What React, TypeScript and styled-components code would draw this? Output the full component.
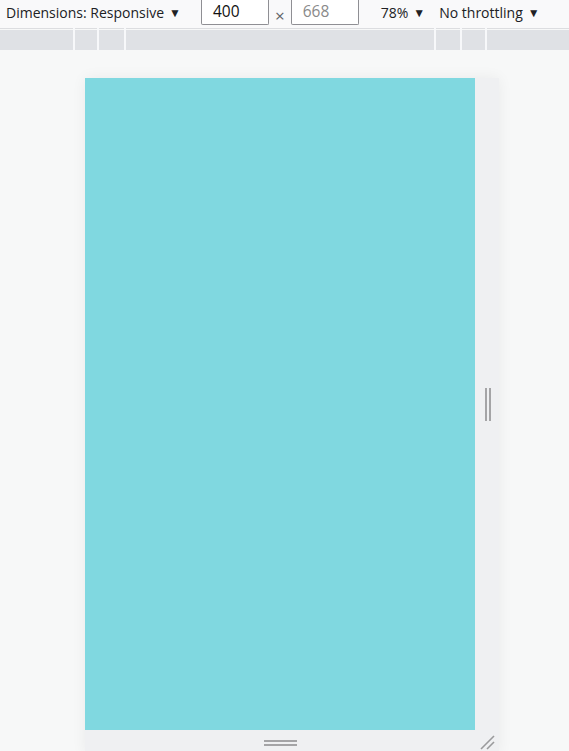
import React from 'react';
import styled, {createGlobalStyle} from 'styled-components';

const GlobalStyle = createGlobalStyle`
    html, body {
        margin: 0;
        padding: 0;
        background: #f7f8f8;
        overflow: hidden;
    }
    body {
        font-family: "Open Sans", "Noto Sans", sans-serif;
    }
`;

const Page = styled.div`
    width: 569px;
    height: 751px;
    display: flex;
    flex-direction: column;
    overflow: hidden;
`;

const Toolbar = styled.div`
    height: 29px;
    flex-shrink: 0;
    display: flex;
    align-items: center;
    background: #f9f9fa;
    border-bottom: 1px solid #dcdde0;
    font-size: 14px;
    color: #202124;
    padding-left: 6px;
    box-sizing: border-box;
`;

const Label = styled.span<{$gap?: number}>`
    margin-left: ${(p) => p.$gap ?? 0}px;
    white-space: nowrap;
    position: relative;
    top: -2px;
`;

const Caret = styled.span`
    font-size: 12px;
    margin-left: 5px;
    position: relative;
    top: -1px;
`;

const SizeInput = styled.div<{$placeholder?: boolean; $gap: number}>`
    width: 68px;
    height: 25px;
    margin-left: ${(p) => p.$gap}px;
    align-self: flex-start;
    box-sizing: border-box;
    border: 1px solid #8f8f94;
    border-top: none;
    border-radius: 0 0 2px 2px;
    background: #fff;
    font-size: 15.5px;
    line-height: 22px;
    padding-left: 11px;
    color: ${(p) => (p.$placeholder ? '#8a8a8a' : '#111')};
`;

const Times = styled.span`
    margin-left: 6px;
    margin-right: 6px;
    font-size: 17px;
    color: #5f6368;
    position: relative;
    top: 1px;
`;

const Ruler = styled.div`
    height: 20px;
    flex-shrink: 0;
    margin-top: 1px;
    background: #dfe1e5;
    position: relative;
`;

const Tick = styled.div<{$x: number}>`
    position: absolute;
    top: -2px;
    bottom: 0;
    left: ${(p) => p.$x}px;
    width: 2px;
    background: #f7f8fa;
`;

const Canvas = styled.div`
    flex: 1;
    min-height: 0;
    padding: 28px 0 0 85px;
`;

const Device = styled.div`
    display: grid;
    grid-template-columns: 390px 24px;
    grid-template-rows: 652px 24px;
    width: 414px;
    box-shadow: 0 0 14px rgba(0, 0, 0, 0.06);
`;

const Viewport = styled.div`
    background: #80d8e0;
`;

const Gutter = styled.div<{$vertical?: boolean}>`
    background: #eff0f2;
    display: flex;
    justify-content: center;
    align-items: ${(p) => (p.$vertical ? 'center' : 'flex-start')};
    padding-top: ${(p) => (p.$vertical ? '0' : '10px')};
    box-sizing: border-box;
`;

const Grip = styled.div<{$vertical?: boolean}>`
    width: ${(p) => (p.$vertical ? '2px' : '33px')};
    height: ${(p) => (p.$vertical ? '33px' : '2px')};
    ${(p) => (p.$vertical
        ? 'border-left: 2px solid #a4a4a6; border-right: 2px solid #a4a4a6; margin-left: 1px;'
        : 'border-top: 2px solid #a4a4a6; border-bottom: 2px solid #a4a4a6;')}
`;

const Corner = styled.div`
    background: #eff0f2;
    display: flex;
    align-items: flex-start;
    justify-content: flex-start;
    padding: 4px 0 0 4px;
    box-sizing: border-box;
`;

const App = () => {
    return (
        <>
            <GlobalStyle/>
            <Page>
                <Toolbar>
                    <Label>
                        {'Dimensions: Responsive'}
                        <Caret>{'▼'}</Caret>
                    </Label>
                    <SizeInput $gap={20}>{'400'}</SizeInput>
                    <Times>{'×'}</Times>
                    <SizeInput $placeholder={true} $gap={0}>{'668'}</SizeInput>
                    <Label $gap={22}>
                        {'78%'}
                        <Caret>{'▼'}</Caret>
                    </Label>
                    <Label $gap={14}>
                        {'No throttling'}
                        <Caret>{'▼'}</Caret>
                    </Label>
                </Toolbar>
                <Ruler>
                    {[73, 97, 124, 434, 460, 485].map((x) => (
                        <Tick key={x} $x={x}/>
                    ))}
                </Ruler>
                <Canvas>
                    <Device>
                        <Viewport/>
                        <Gutter $vertical={true}>
                            <Grip $vertical={true}/>
                        </Gutter>
                        <Gutter>
                            <Grip/>
                        </Gutter>
                        <Corner>
                            <svg width='16' height='16' viewBox='0 0 16 16'>
                                <line x1='2' y1='15' x2='15' y2='2' stroke='#9a9a9c' strokeWidth='1.6'/>
                                <line x1='8' y1='15' x2='15' y2='8' stroke='#9a9a9c' strokeWidth='1.6'/>
                            </svg>
                        </Corner>
                    </Device>
                </Canvas>
            </Page>
        </>
    );
};

export default App;
